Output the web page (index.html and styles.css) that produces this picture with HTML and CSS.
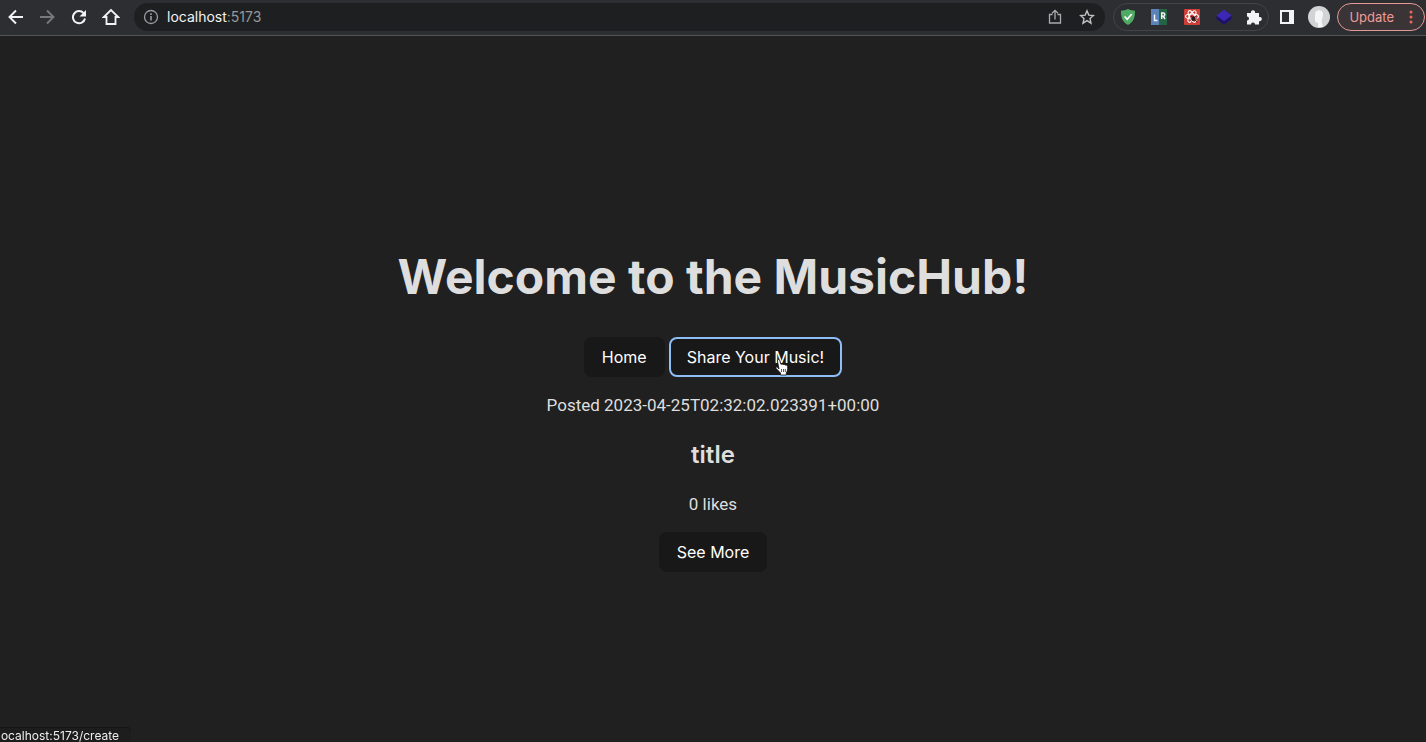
FILE: index.html
```
<!DOCTYPE html>
<html lang="en">
<head>
<meta charset="utf-8">
<title>MusicHub</title>
<link rel="stylesheet" href="styles.css">
</head>
<body>
<header class="toolbar">
  <nav class="nav-buttons">
    <button class="icon-button" aria-label="Back"><svg width="16" height="16" viewBox="0 0 16 16"><path d="M15 8H2M8 1.5 1.5 8 8 14.500" fill="none" stroke="#f1f3f4" stroke-width="1.900"/></svg></button>
    <button class="icon-button" aria-label="Forward"><svg width="16" height="16" viewBox="0 0 16 16"><path d="M1 8h13M8 1.500 14.500 8 8 14.500" fill="none" stroke="#77787b" stroke-width="1.900"/></svg></button>
    <button class="icon-button" aria-label="Reload"><svg width="16" height="16" viewBox="0 0 16 16"><path d="M14 9.500A6.100 6.100 0 1 1 12.600 4.100" fill="none" stroke="#f1f3f4" stroke-width="2"/><path d="M15 1v6.500H8.500z" fill="#f1f3f4"/></svg></button>
    <button class="icon-button" aria-label="Home page"><svg width="18" height="18" viewBox="0 0 18 18"><path d="M9 2 1.800 9H4.500v7h9V9h2.700z" fill="none" stroke="#f1f3f4" stroke-width="1.800"/></svg></button>
  </nav>
  <div class="address">
    <svg width="16" height="16" viewBox="0 0 16 16"><circle cx="8" cy="8" r="6.500" fill="none" stroke="#9a9b9e" stroke-width="1.300"/><path d="M8 7v4.500M8 4.300V6" stroke="#9a9b9e" stroke-width="1.600"/></svg>
    <span class="url">localhost<span class="port">:5173</span></span>
    <button class="icon-button" aria-label="Share"><svg width="16" height="16" viewBox="0 0 16 16"><path d="M5.500 5.500h-3V14h11V5.500h-3M8 10.500V1.500M5 4.300l3-3 3 3" fill="none" stroke="#a9abae" stroke-width="1.300"/></svg></button>
    <button class="icon-button" aria-label="Bookmark"><svg width="16" height="16" viewBox="0 0 16 16"><path d="m8 1.800 1.800 4.300 4.700.4-3.500 3.100 1 4.600L8 11.700l-4 2.500 1-4.600-3.500-3.100 4.700-.4z" fill="none" stroke="#c0c2c5" stroke-width="1.400"/></svg></button>
  </div>
  <div class="extensions">
    <button class="icon-button" aria-label="Ad blocker"><svg width="18" height="18" viewBox="0 0 18 18"><path d="M9 1c2.200 1.200 4.600 1.600 7 1.700C16 9 15 13.500 9 17 3 13.500 2 9 2 2.700 4.400 2.600 6.800 2.200 9 1z" fill="#4fab63"/><path d="m5.500 8.500 2.700 2.700 4.600-5.200" fill="none" stroke="#fff" stroke-width="1.700"/></svg></button>
    <button class="icon-button" aria-label="LR extension"><svg width="18" height="18" viewBox="0 0 18 18"><path d="M1 1h8v16H1z" fill="#5c82ba"/><path d="M9 1h8v16H9z" fill="#246343"/><path d="M4.500 6.500v6H7.500M11.700 11V5h1.500a1.500 1.500 0 0 1 0 3.200h-1.500m1.600 0L15 11" fill="none" stroke="#f1f4f7" stroke-width="1.500"/></svg></button>
    <button class="icon-button" aria-label="React tools"><svg width="18" height="18" viewBox="0 0 18 18"><rect x="1" y="1" width="16" height="16" rx="1" fill="#cc3e37"/><g fill="none" stroke="#fff" stroke-width="1.100"><ellipse cx="9" cy="8.500" rx="6.500" ry="2.500"/><ellipse cx="9" cy="8.500" rx="6.500" ry="2.500" transform="rotate(60 9 8.500)"/><ellipse cx="9" cy="8.500" rx="6.500" ry="2.500" transform="rotate(120 9 8.500)"/></g><ellipse cx="10.500" cy="10.500" rx="2" ry="2.600" fill="#33191a"/><path d="m8 8 6 6M13.500 7.500l-5 6M7.500 11h6.500" stroke="#33191a" stroke-width=".9"/></svg></button>
    <button class="icon-button" aria-label="Cube extension"><svg width="18" height="18" viewBox="0 0 18 18"><path d="m1.500 8 7.500 4.500L16.500 8v3.300L9 16.500l-7.500-5.200z" fill="#1d116e"/><path d="M9 1.500 16.500 7.500 9 13 1.500 7.500z" fill="#3a28b5"/></svg></button>
    <button class="icon-button" aria-label="Extensions"><svg width="18" height="18" viewBox="0 0 18 18"><path d="M2 5h4a2.100 2.100 0 1 1 4 0h4v4a2.200 2.200 0 1 1 0 4.200V16.500H10a2 2 0 0 0-4 0H2V12.500a2 2 0 0 0 0-4z" fill="#f1f3f4"/></svg></button>
  </div>
  <button class="icon-button" aria-label="Side panel"><svg width="16" height="16" viewBox="0 0 16 16"><path d="M2 2h12v12H2z" fill="none" stroke="#f1f3f4" stroke-width="2"/><path d="M10 1h5v14h-5z" fill="#f1f3f4"/></svg></button>
  <button class="icon-button" aria-label="Profile"><svg width="22" height="22" viewBox="0 0 22 22"><circle cx="11" cy="11" r="11" fill="#d2d3d5"/><path d="M7 8c0-5 8-5 8 0 0 3-1 5-1.500 7.500L15 21H10v-4c-2 0-3-1-3-3z" fill="#f6f6f6"/></svg></button>
  <button class="update">Update<svg width="4" height="14" viewBox="0 0 4 14"><g fill="#ee675c"><circle cx="2" cy="2" r="1.500"/><circle cx="2" cy="7" r="1.500"/><circle cx="2" cy="12" r="1.500"/></g></svg></button>
</header>
<main class="page">
  <h1 class="heading">Welcome to the MusicHub!</h1>
  <nav class="links">
    <button class="button">Home</button>
    <button class="button button-focused">Share Your Music!<svg class="cursor" width="14" height="18" viewBox="0 0 14 18"><path d="M4 11 2.500 3.200C2.100 1.300 4.100.8 4.700 2.500L6 6.500c.8-.8 1.800-.5 2.100.2.800-.6 1.800-.3 2.200.5 1.200-.5 2.200.2 2.300 1.300.3 3.500-.2 4.500-1.300 6.300V17H5.500v-2L1.200 10.500C.4 9.300 1.600 8.400 2.700 9.400z" fill="#fff" stroke="#111" stroke-width=".8"/><path d="M6.500 11v3M8.500 11v3M10.300 11v3" stroke="#111" stroke-width=".7"/></svg></button>
  </nav>
  <article class="post">
    <p class="text">Posted 2023-04-25T02:32:02.023391+00:00</p>
    <h2 class="title">title</h2>
    <p class="text">0 likes</p>
    <button class="button">See More</button>
  </article>
</main>
<div class="status">localhost:5173/create</div>
</body>
</html>
```
FILE: styles.css
```
* { box-sizing: border-box; }
body {
  margin: 0;
  min-height: 100vh;
  display: flex;
  flex-direction: column;
  overflow: hidden;
  background: #202020;
  color: #dedede;
  font: 16px/24px Inter, sans-serif;
}
button { border: 0; margin: 0; padding: 0; background: none; color: inherit; font: inherit; }
svg { display: block; flex: none; }
h1, h2, p { margin: 0; }
.toolbar {
  display: flex;
  align-items: center;
  height: 36px;
  padding: 0 1px 2px 0;
  background: #2d2e31;
  border-bottom: 1px solid #545454;
}
.nav-buttons { display: flex; width: 134px; }
.icon-button { display: flex; align-items: center; justify-content: center; width: 32px; height: 28px; flex: none; }
.nav-buttons .icon-button:first-child { width: 31px; }
.address {
  flex: 1;
  display: flex;
  align-items: center;
  height: 28px;
  padding: 0 2px 0 9px;
  border-radius: 14px;
  background: #1e1f21;
}
.url { flex: 1; padding-left: 8px; font-size: 14px; color: #f1f3f4; }
.port { color: #96989b; }
.extensions {
  display: flex;
  align-items: center;
  height: 28px;
  margin: 0 2px 0 8px;
  border: 1px solid #434447;
  border-radius: 14px;
}
.extensions .icon-button:first-child { width: 28px; }
.extensions .icon-button:nth-child(2) { width: 34px; }
.extensions .icon-button:last-child { width: 28px; }
.update {
  display: flex;
  align-items: center;
  gap: 15px;
  height: 28px;
  margin-left: 2px;
  padding: 0 11px 0 11px;
  border: 1px solid #e49a94;
  border-radius: 14px;
  background: #3a3436;
  color: #ee9d96;
  font-size: 13px;
}
.page {
  flex: 1;
  display: flex;
  flex-direction: column;
  align-items: center;
  justify-content: center;
  padding-top: 43px;
}
.heading { margin-bottom: 32px; font-size: 48px; line-height: 56px; font-weight: 700; }
.links { display: flex; gap: 4px; margin-bottom: 16px; }
.text { font-family: Roboto, sans-serif; font-size: 17px; }
.button {
  position: relative;
  height: 40px;
  padding: 0 18px;
  border-radius: 8px;
  background: #181818;
  color: #fff;
}
.button-focused { outline: 2px solid #8fbdf5; outline-offset: -2px; }
.cursor { position: absolute; top: 21px; right: 53px; }
.post { display: flex; flex-direction: column; align-items: center; }
.title { margin: 20px 0 19px; font-size: 24px; line-height: 36px; font-weight: 600; }
.post .button { margin-top: 16px; }
.status {
  position: fixed;
  left: 0;
  bottom: 0;
  padding: 2px 12px 0 0;
  border-top: 1px solid #151515;
  border-radius: 0 4px 0 0;
  background: #1d1d1d;
  color: #eee;
  font-size: 12px;
  line-height: 12px;
  text-indent: -2px;
}
```
